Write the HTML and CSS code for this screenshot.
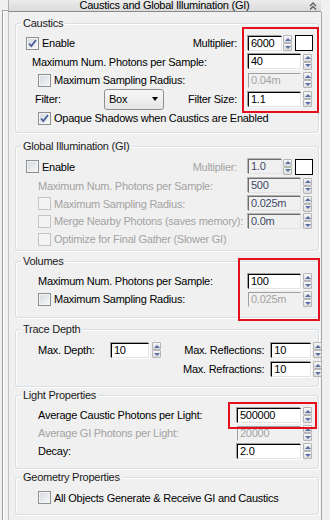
FILE: index.html
```html
<!DOCTYPE html>
<html lang="en">
<head>
    <meta charset="UTF-8">
    <meta name="viewport" content="width=device-width, initial-scale=1.0">
    <title>Caustics and Global Illumination (GI)</title>
    <link rel="stylesheet" href="styles.css">
</head>
<body>
    <div class="page">
        <div class="frame-edge"></div>

        <div class="rollout">
            <div class="rollout-title">
                <span class="rollout-name">Caustics and Global Illumination (GI)</span>
                <svg class="collapse" width="8" height="8" viewBox="0 0 8 8">
                    <path d="M1 4l3-3 3 3M1 7.5l3-3 3 3"/>
                </svg>
            </div>

            <div class="rollout-body">

                <!-- Caustics -->
                <div class="group caustics">
                    <div class="group-title"><span>Caustics</span></div>
                    <div class="row in-10">
                        <span class="check on"><svg viewBox="0 0 11 11"><path d="M2 5.5l2.3 2.6L9 2"/></svg></span>Enable
                        <span class="side-label">Multiplier:</span>
                        <span class="field short">6000</span>
                        <span class="spin"><i></i><i></i></span>
                        <span class="swatch"></span>
                    </div>
                    <div class="row in-16 h19">
                        Maximum Num. Photons per Sample:
                        <span class="field wide push">40</span>
                        <span class="spin"><i></i><i></i></span>
                    </div>
                    <div class="row">
                        <span class="check"></span>Maximum Sampling Radius:
                        <span class="field wide push off">0.04m</span>
                        <span class="spin"><i></i><i></i></span>
                    </div>
                    <div class="row in-19 h20">
                        <span class="filter-label">Filter:</span>
                        <span class="select">Box<b></b></span>
                        <span class="side-label">Filter Size:</span>
                        <span class="field wide">1.1</span>
                        <span class="spin"><i></i><i></i></span>
                    </div>
                    <div class="row">
                        <span class="check on"><svg viewBox="0 0 11 11"><path d="M2 5.5l2.3 2.6L9 2"/></svg></span>Opaque Shadows when Caustics are Enabled
                    </div>
                </div>

                <!-- Global Illumination -->
                <div class="group gi">
                    <div class="group-title"><span>Global Illumination (GI)</span></div>
                    <div class="row in-10 h19">
                        <span class="check"></span>Enable
                        <span class="side-label muted">Multiplier:</span>
                        <span class="field short dim">1.0</span>
                        <span class="spin"><i></i><i></i></span>
                        <span class="swatch"></span>
                    </div>
                    <div class="row h19 muted">
                        Maximum Num. Photons per Sample:
                        <span class="field wide push dim">500</span>
                        <span class="spin"><i></i><i></i></span>
                    </div>
                    <div class="row h17 muted">
                        <span class="check disabled"></span>Maximum Sampling Radius:
                        <span class="field wide push dim">0.025m</span>
                        <span class="spin"><i></i><i></i></span>
                    </div>
                    <div class="row muted">
                        <span class="check disabled"></span>Merge Nearby Photons (saves memory):
                        <span class="field wide push dim">0.0m</span>
                        <span class="spin"><i></i><i></i></span>
                    </div>
                    <div class="row muted">
                        <span class="check disabled"></span>Optimize for Final Gather (Slower GI)
                    </div>
                </div>

                <!-- Volumes -->
                <div class="group volumes">
                    <div class="group-title"><span>Volumes</span></div>
                    <div class="row">
                        Maximum Num. Photons per Sample:
                        <span class="field wide push">100</span>
                        <span class="spin"><i></i><i></i></span>
                    </div>
                    <div class="row">
                        <span class="check"></span>Maximum Sampling Radius:
                        <span class="field wide push off">0.025m</span>
                        <span class="spin"><i></i><i></i></span>
                    </div>
                </div>

                <!-- Trace Depth -->
                <div class="group trace">
                    <div class="group-title"><span>Trace Depth</span></div>
                    <div class="trace-body">
                        <div class="row h20 depth">
                            <span class="depth-label">Max. Depth:</span>
                            <span class="field depth-field">10</span>
                            <span class="spin wide-gap"><i></i><i></i></span>
                        </div>
                        <div class="trace-right">
                            <div class="row h20">
                                <span class="side-label">Max. Reflections:</span>
                                <span class="field mid">10</span>
                                <span class="spin"><i></i><i></i></span>
                            </div>
                            <div class="row">
                                <span class="side-label">Max. Refractions:</span>
                                <span class="field mid">10</span>
                                <span class="spin"><i></i><i></i></span>
                            </div>
                        </div>
                    </div>
                </div>

                <!-- Light Properties -->
                <div class="group light">
                    <div class="group-title"><span>Light Properties</span></div>
                    <div class="row">
                        Average Caustic Photons per Light:
                        <span class="field long push">500000</span>
                        <span class="spin"><i></i><i></i></span>
                    </div>
                    <div class="row muted">
                        Average GI Photons per Light:
                        <span class="field long push off">20000</span>
                        <span class="spin"><i></i><i></i></span>
                    </div>
                    <div class="row">
                        Decay:
                        <span class="field long push">2.0</span>
                        <span class="spin"><i></i><i></i></span>
                    </div>
                </div>

                <!-- Geometry Properties -->
                <div class="group geometry">
                    <div class="group-title"><span>Geometry Properties</span></div>
                    <div class="row h19">
                        <span class="check"></span>All Objects Generate &amp; Receive GI and Caustics
                    </div>
                </div>

            </div>
        </div>

        <!-- red annotation boxes -->
        <div class="mark mark-caustics"></div>
        <div class="mark mark-volumes"></div>
        <div class="mark mark-light"></div>
    </div>
</body>
</html>
```

FILE: styles.css
```css
* {
    box-sizing: border-box;
}

body {
    margin: 0;
    background-color: #f0f0f0;
    font-family: "Liberation Sans", Arial, sans-serif;
    font-size: 11px;
    letter-spacing: -0.25px;
    color: #000;
}

.page {
    position: relative;
    display: flex;
    width: 330px;
    height: 520px;
    overflow: hidden;
}

.frame-edge {
    flex: none;
    width: 6px;
    margin: 10px 0 0 2px;
    border-left: 1px solid #a0a0a0;
    border-top: 1px solid #a0a0a0;
    box-shadow: inset 1px 1px 0 #fff;
}

.rollout {
    flex: none;
    width: 314px;
    display: flex;
    flex-direction: column;
}

/* rollout header bar */
.rollout-title {
    display: flex;
    align-items: center;
    height: 12px;
    margin-right: 1px;
    padding-left: 11px;
    background: linear-gradient(#ececec, #dadada);
    border-left: 1px solid #b0b0b0;
    border-bottom: 1px solid #8a8a8a;
}

.rollout-name {
    flex: 1;
    text-align: center;
    line-height: 11px;
}

.collapse {
    margin-right: 4px;
    fill: none;
    stroke: #5e5e5e;
    stroke-width: 1.4;
}

.rollout-body {
    flex: 1;
    border-left: 1px solid #c4c4c4;
    border-right: 1px solid #a8a8a8;
}

/* group boxes */
.group {
    margin: 0 2px 0 6px;
    border: 1px solid #d5dfe5;
    border-radius: 3px;
    box-shadow: inset 1px 1px 0 #fff, 1px 1px 0 #fff;
}

.group-title {
    height: 12px;
    margin: -7px 0 5px 5px;
    line-height: 12px;
}

.group-title span {
    display: inline-block;
    padding: 0 2px;
    background-color: #f0f0f0;
    color: #1b1b1b;
}

.caustics { margin-top: 11px; padding-bottom: 5px; }
.gi { margin-top: 13px; padding-bottom: 2px; }
.volumes { margin-top: 10px; padding-bottom: 9px; }
.trace { margin-top: 11px; padding-bottom: 8px; }
.light { margin-top: 8px; padding-bottom: 8px; }
.geometry { margin-top: 8px; padding-bottom: 7px; }

/* rows */
.row {
    display: flex;
    align-items: center;
    height: 18px;
    padding: 0 6px 0 22px;
    white-space: nowrap;
}

.row.h17 { height: 17px; }
.row.h19 { height: 19px; }
.row.h20 { height: 20px; }

.row.in-10 { padding-left: 10px; }
.row.in-16 { padding-left: 16px; }
.row.in-19 { padding-left: 19px; }

.muted {
    color: #a3a3a3;
}

.push {
    margin-left: auto;
}

.side-label {
    margin-left: auto;
    margin-right: 11px;
}

/* checkboxes */
.check {
    flex: none;
    display: inline-flex;
    align-items: center;
    justify-content: center;
    width: 13px;
    height: 13px;
    margin-right: 3px;
    border: 1px solid #8e8f8f;
    background: linear-gradient(135deg, #d4d8dd, #f7f8f9);
    box-shadow: inset 0 0 0 1px #f4f4f4;
}

.check svg {
    width: 11px;
    height: 11px;
    fill: none;
    stroke: #4a5f97;
    stroke-width: 1.8;
}

.check.disabled {
    border-color: #c4c4c4;
    background: #f4f4f4;
    box-shadow: none;
}

/* spinner fields */
.field {
    flex: none;
    height: 15px;
    padding: 0 2px;
    line-height: 13px;
    background-color: #fff;
    border: 1px solid;
    border-color: #000 #e3e3e3 #e3e3e3 #000;
    box-shadow: -1px -1px 0 #a0a0a0, 1px 1px 0 #fff;
    color: #000;
}

.field.short { width: 34px; }
.field.wide { width: 53px; }
.field.mid { width: 40px; }
.field.long { width: 64px; }

.field.off {
    background-color: #f0f0f0;
    border-color: #a0a0a0 #f0f0f0 #f0f0f0 #a0a0a0;
    box-shadow: none;
    color: #a3a3a3;
}

.field.dim {
    background-color: #f0f0f0;
    border-color: #6d6d6d #e3e3e3 #e3e3e3 #6d6d6d;
    box-shadow: -1px -1px 0 #b4b4b4;
    color: #3e4a68;
}

.spin {
    flex: none;
    display: flex;
    flex-direction: column;
    width: 9px;
    height: 16px;
    margin-left: 2px;
}

.field.short + .spin {
    margin-left: 1px;
}

.spin.wide-gap {
    margin-left: 3px;
}

.spin i {
    flex: 1;
    display: flex;
    align-items: center;
    justify-content: center;
    background: linear-gradient(#f8f8f8, #dcdcdc);
    border: 1px solid #b6b6b6;
    border-radius: 1px;
}

.spin i::after {
    content: "";
    border-left: 3px solid transparent;
    border-right: 3px solid transparent;
    border-bottom: 3px solid #5b6ea6;
}

.spin i + i::after {
    border-bottom: 0;
    border-top: 3px solid #5b6ea6;
}

.swatch {
    flex: none;
    width: 18px;
    height: 16px;
    margin: 0 -1px 0 3px;
    background-color: #fff;
    border: 1px solid #000;
}

/* filter dropdown */
.filter-label {
    width: 69px;
}

.select {
    flex: none;
    display: flex;
    align-items: center;
    justify-content: space-between;
    width: 60px;
    height: 21px;
    padding: 0 5px 0 4px;
    border: 1px solid #8e8f8f;
    border-radius: 3px;
    background: linear-gradient(#f7f7f7, #e6e6e6);
}

.select b {
    border-left: 3.5px solid transparent;
    border-right: 3.5px solid transparent;
    border-top: 4px solid #000;
}

/* trace depth layout */
.trace-body {
    display: flex;
}

.depth {
    padding-right: 0;
}

.depth-label {
    width: 73px;
}

.field.depth-field {
    width: 38px;
}

.trace-right {
    flex: 1;
}

.trace-right .side-label {
    margin-right: 7px;
}

/* red annotation boxes drawn over the panel */
.mark {
    position: absolute;
    border: 2px solid #e3101e;
}

.mark-caustics {
    left: 242px;
    top: 27px;
    width: 77px;
    height: 86px;
}

.mark-volumes {
    left: 238px;
    top: 258px;
    width: 82px;
    height: 63px;
}

.mark-light {
    left: 228px;
    top: 402px;
    width: 89px;
    height: 27px;
}
```
